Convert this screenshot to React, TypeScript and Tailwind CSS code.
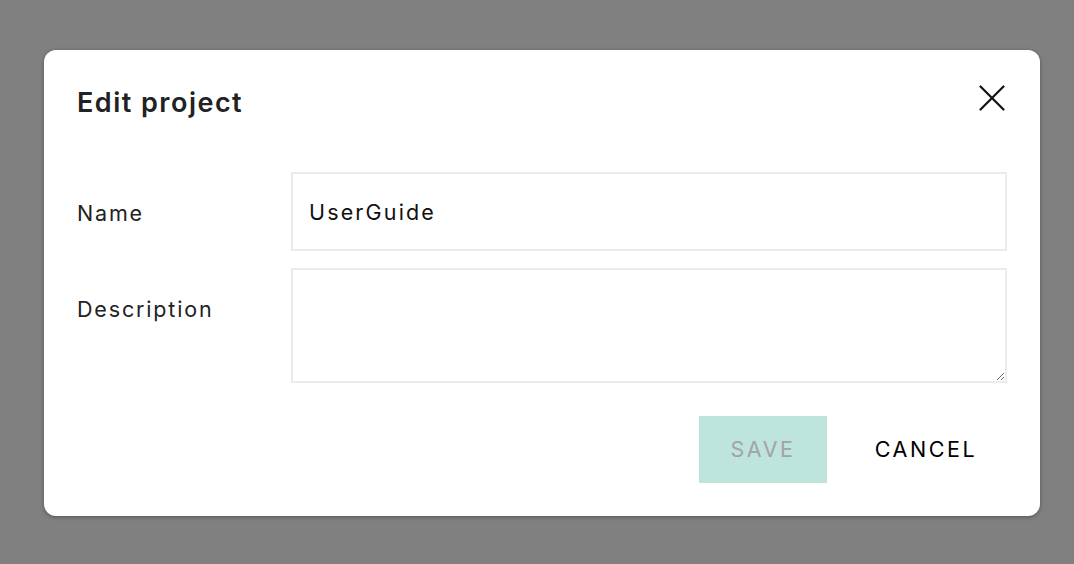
import React, { useState } from 'react';

// Edit project modal over a dimmed backdrop
export default function App() {
  const [name, setName] = useState('UserGuide');
  const [description, setDescription] = useState('');

  return (
    <div
      className="w-[1074px] h-[564px] bg-[#808080] pl-[44px] pt-[50px]"
      style={{ fontFamily: 'Inter, "Noto Sans", sans-serif' }}
    >
      <div className="w-[996px] h-[466px] bg-white rounded-[12px] shadow-[0_1px_4px_rgba(0,0,0,0.35)] pl-[33px] pr-[33px] pt-[34px] pb-[33px] flex flex-col">
        {/* Header */}
        <div className="flex items-start justify-between h-[36px]">
          <h2 className="text-[27px] leading-[38px] font-semibold text-[#222] tracking-[0.055em]">Edit project</h2>
          <button className="mt-[1px] mr-[2px] w-[26px] h-[26px] flex items-center justify-center cursor-pointer">
            <svg width="26" height="26" viewBox="0 0 26 26" fill="none" stroke="#111" strokeWidth="2.2" strokeLinecap="round">
              <path d="M1.5 1.5 L24.5 24.5 M24.5 1.5 L1.5 24.5" />
            </svg>
          </button>
        </div>

        {/* Fields */}
        <div className="mt-[52px] flex flex-col gap-[17px]">
          <div className="flex">
            <label className="w-[214px] h-[79px] pt-[3px] flex items-center text-[21.5px] text-[#222] tracking-[0.085em]">Name</label>
            <input
              value={name}
              onChange={(e) => setName(e.target.value)}
              className="w-[716px] h-[79px] border-2 border-[#ebebeb] px-4 text-[21.5px] text-[#111] tracking-[0.1em] outline-none"
            />
          </div>
          <div className="flex">
            <label className="w-[214px] h-[79px] pt-[3px] flex items-center text-[21.5px] text-[#222] tracking-[0.085em]">Description</label>
            <textarea
              value={description}
              onChange={(e) => setDescription(e.target.value)}
              className="w-[716px] h-[115px] border-2 border-[#ebebeb] px-4 py-[22px] text-[21.5px] outline-none"
            />
          </div>
        </div>

        {/* Actions */}
        <div className="mt-[33px] flex justify-end gap-[35px] pr-[17px]">
          <button disabled className="w-[128px] h-[67px] bg-[#bde5dc] text-[#a3a2aa] text-[21.5px] tracking-[0.12em]">SAVE</button>
          <button className="w-[128px] h-[67px] text-black text-[21.5px] tracking-[0.12em] cursor-pointer">CANCEL</button>
        </div>
      </div>
    </div>
  );
}
